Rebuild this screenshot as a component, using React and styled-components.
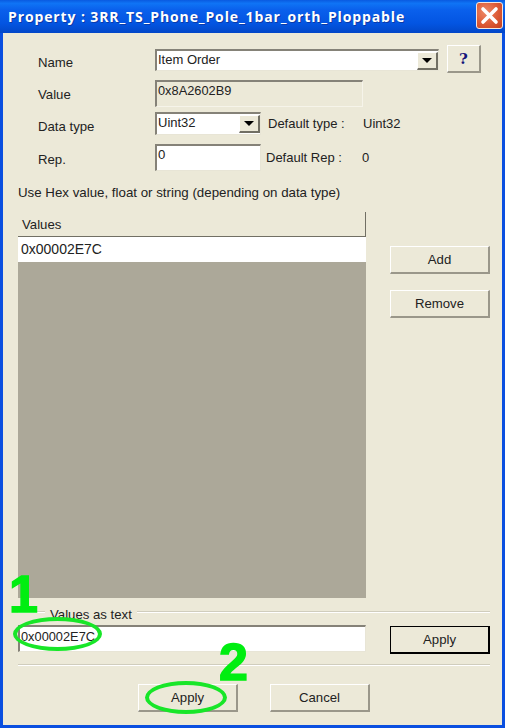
import React from 'react'
import styled, { createGlobalStyle } from 'styled-components'

const Global = createGlobalStyle`
  html, body { margin: 0; padding: 0; background: #ece9d8; }
  * { box-sizing: border-box; }
`

const Window = styled.div`
  position: relative;
  width: 505px;
  height: 728px;
  overflow: hidden;
  display: flex;
  flex-direction: column;
  background: #0a4fe0;
  font-family: "Liberation Sans", Arial, sans-serif;
  font-size: 13.2px;
  color: #222;
`

const TitleBar = styled.div`
  height: 33px;
  flex: none;
  display: flex;
  align-items: center;
  justify-content: space-between;
  padding: 0 2px 0 8px;
  background: linear-gradient(180deg, #0a5ae0 0%, #0f74f5 10%, #0a60ec 30%, #0355e2 70%, #0247c8 100%);
`

const Title = styled.div`
  font-family: "Open Sans", sans-serif;
  font-weight: 700;
  font-size: 14px;
  letter-spacing: 0.88px;
  color: #fff;
  text-shadow: 1px 1px 0 #0b3aa8;
`

const CloseBtn = styled.div`
  width: 27px;
  height: 27px;
  margin-top: -3px;
  display: flex;
  align-items: center;
  justify-content: center;
  border: 1px solid #f4e6e0;
  border-radius: 3px;
  background: radial-gradient(circle at 35% 35%, #ee8a68 0%, #dc5a36 55%, #c4401f 100%);
`

const Body = styled.div`
  flex: 1;
  margin: 0 3px 3px;
  padding-top: 16px;
  background: #ece9d8;
  display: flex;
  flex-direction: column;
`

const Row = styled.div`
  display: flex;
  align-items: center;
  height: ${p => p.$h}px;
  margin-top: ${p => p.$mt || 0}px;
  padding-left: 35px;
`

const Label = styled.div`
  width: 117px;
  flex: none;
  padding-top: ${p => p.$pt || 2}px;
`

const Sunken = styled.div`
  width: ${p => p.$w}px;
  height: 100%;
  flex: none;
  padding: 1px 1px;
  line-height: 15px;
  background: ${p => (p.$disabled ? '#ece9d8' : '#fff')};
  font-size: ${p => (p.$disabled ? '12.8px' : 'inherit')};
  border-top: 2px solid #858278;
  border-left: 2px solid #858278;
  border-right: 1px solid ${p => (p.$disabled ? '#f6f4ea' : '#e8e5d6')};
  border-bottom: 1px solid ${p => (p.$disabled ? '#f6f4ea' : '#e8e5d6')};
`

const Combo = styled(Sunken)`
  display: flex;
  justify-content: space-between;
  padding-right: 0;
  font-size: 13px;
`

const ComboArrow = styled.div`
  width: 21px;
  height: 18px;
  flex: none;
  display: flex;
  align-items: center;
  justify-content: center;
  background: #ece9d8;
  border-right: 2px solid #716f64;
  border-bottom: 2px solid #716f64;
  border-top: 1px solid #fff;
  border-left: 1px solid #fff;
  &::after {
    content: '';
    border-left: 5px solid transparent;
    border-right: 5px solid transparent;
    border-top: 5px solid #000;
  }
`

const HelpBtn = styled.div`
  width: 34px;
  height: 28px;
  margin: -2px 0 0 8px;
  display: flex;
  align-items: center;
  justify-content: center;
  background: #ece9d8;
  font-family: "DejaVu Serif", serif;
  font-weight: 700;
  font-size: 15px;
  color: #14147a;
  border-top: 1px solid #fff;
  border-left: 1px solid #fff;
  border-right: 2px solid #9a978a;
  border-bottom: 2px solid #9a978a;
`

const Note = styled.div`
  flex: none;
  margin-left: ${p => p.$ml || 0}px;
  width: ${p => (p.$w ? `${p.$w}px` : 'auto')};
  font-size: 13px;
  align-self: center;
`

const Hint = styled.div`
  margin: 13px 0 0 15px;
  height: 16px;
  line-height: 17px;
  font-size: 13.3px;
`

const Middle = styled.div`
  display: flex;
  margin: 12px 0 0 15px;
  height: 386px;
`

const Table = styled.div`
  width: 348px;
  display: flex;
  flex-direction: column;
  background: #aca899;
`

const TableHead = styled.div`
  height: 25px;
  padding: 3px 4px;
  line-height: 19px;
  background: #ece9d8;
  border-right: 1px solid #716f64;
  border-bottom: 1px solid #716f64;
`

const TableCell = styled.div`
  height: 25px;
  padding: 0 3px;
  line-height: 25px;
  font-size: 14px;
  background: #fff;
`

const SideButtons = styled.div`
  display: flex;
  flex-direction: column;
  gap: 16px;
  margin: 34px 0 0 24px;
`

const Button = styled.div`
  width: 100px;
  height: 28px;
  flex: none;
  display: flex;
  align-items: center;
  justify-content: center;
  background: #ece9d8;
  border-top: 1px solid #fff;
  border-left: 1px solid #fff;
  border-right: 2px solid #9a978a;
  border-bottom: 2px solid #9a978a;
`

const DefaultButton = styled(Button)`
  margin: 1px 0 0 24px;
  border: 2px solid #000;
  border-top-width: 1px;
  border-left-width: 1px;
`

const GroupHead = styled.div`
  display: flex;
  align-items: center;
  gap: 5px;
  margin: 8px 12px 0 15px;
  height: 16px;
`

const GroupLine = styled.div`
  height: 2px;
  flex: ${p => (p.$short ? 'none' : 1)};
  width: ${p => (p.$short ? '27px' : 'auto')};
  margin-top: -4px;
  background: #d0cdbd;
  border-bottom: 1px solid #fff;
`

const TextRow = styled.div`
  display: flex;
  align-items: flex-start;
  margin: 3px 0 0 15px;
  height: 28px;
`

const TextInput = styled(Sunken)`
  height: 27px;
  padding: 2px 1px;
  font-size: 12.8px;
`

const Separator = styled.div`
  height: 2px;
  margin: 11px 12px 0 15px;
  background: #d0cdbd;
  border-bottom: 1px solid #fff;
`

const Footer = styled.div`
  display: flex;
  gap: 32px;
  margin: 18px 0 0 135px;
`

const Digit = styled.div`
  position: absolute;
  left: ${p => p.$x}px;
  top: ${p => p.$y}px;
  font-weight: 700;
  font-size: 52px;
  line-height: 50px;
  color: #00ee11;
  -webkit-text-stroke: 1.5px #00ee11;
`

const Oval = styled.div`
  position: absolute;
  left: ${p => p.$x}px;
  top: ${p => p.$y}px;
  width: ${p => p.$w}px;
  height: ${p => p.$h}px;
  border: 4px solid #18e628;
  border-radius: 50%;
`

export default function App() {
  return (
    <Window>
      <Global />
      <TitleBar>
        <Title>Property : 3RR_TS_Phone_Pole_1bar_orth_Ploppable</Title>
        <CloseBtn>
          <svg width="19" height="19" viewBox="0 0 19 19">
            <path d="M3 3 L16 16 M16 3 L3 16" stroke="#fff" strokeWidth="3.6" strokeLinecap="round" />
          </svg>
        </CloseBtn>
      </TitleBar>
      <Body>
        <Row $h={22}>
          <Label $pt={4}>Name</Label>
          <Combo $w={284}>
            Item Order
            <ComboArrow />
          </Combo>
          <HelpBtn>?</HelpBtn>
        </Row>
        <Row $h={27} $mt={9}>
          <Label $pt={0}>Value</Label>
          <Sunken $w={208} $disabled>0x8A2602B9</Sunken>
        </Row>
        <Row $h={23} $mt={5}>
          <Label $pt={6}>Data type</Label>
          <Combo $w={106}>
            Uint32
            <ComboArrow />
          </Combo>
          <Note $ml={7} $w={95}>Default type :</Note>
          <Note>Uint32</Note>
        </Row>
        <Row $h={27} $mt={9}>
          <Label $pt={4}>Rep.</Label>
          <Sunken $w={106}>0</Sunken>
          <Note $ml={5} $w={96}>Default Rep :</Note>
          <Note>0</Note>
        </Row>
        <Hint>Use Hex value, float or string (depending on data type)</Hint>
        <Middle>
          <Table>
            <TableHead>Values</TableHead>
            <TableCell>0x00002E7C</TableCell>
          </Table>
          <SideButtons>
            <Button>Add</Button>
            <Button>Remove</Button>
          </SideButtons>
        </Middle>
        <GroupHead>
          <GroupLine $short />
          <span>Values as text</span>
          <GroupLine />
        </GroupHead>
        <TextRow>
          <TextInput $w={348}>0x00002E7C</TextInput>
          <DefaultButton>Apply</DefaultButton>
        </TextRow>
        <Separator />
        <Footer>
          <Button>Apply</Button>
          <Button>Cancel</Button>
        </Footer>
      </Body>
      <Digit $x={9} $y={569}>1</Digit>
      <Digit $x={219} $y={637}>2</Digit>
      <Oval $x={13} $y={617} $w={89} $h={34} />
      <Oval $x={145} $y={681} $w={82} $h={33} />
    </Window>
  )
}
